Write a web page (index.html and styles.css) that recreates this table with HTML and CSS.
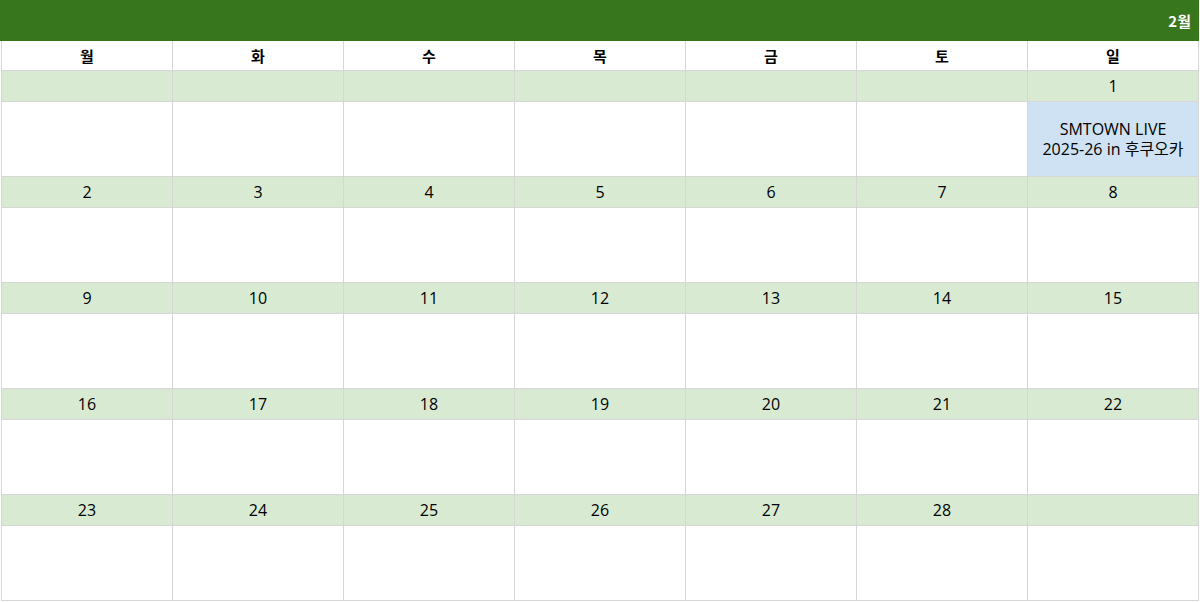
FILE: index.html
```html
<!DOCTYPE html>
<html lang="ko">
<head>
<meta charset="utf-8">
<title>2월</title>
<link rel="stylesheet" href="styles.css">
</head>
<body>
<div class="title">2월</div>
<div class="grid">
  <div class="cell wd">월</div><div class="cell wd">화</div><div class="cell wd">수</div><div class="cell wd">목</div><div class="cell wd">금</div><div class="cell wd">토</div><div class="cell wd">일</div>

  <div class="cell d"></div><div class="cell d"></div><div class="cell d"></div><div class="cell d"></div><div class="cell d"></div><div class="cell d"></div><div class="cell d">1</div>
  <div class="cell e"></div><div class="cell e"></div><div class="cell e"></div><div class="cell e"></div><div class="cell e"></div><div class="cell e"></div><div class="cell e ev">SMTOWN LIVE<br>2025-26 in 후쿠오카</div>

  <div class="cell d">2</div><div class="cell d">3</div><div class="cell d">4</div><div class="cell d">5</div><div class="cell d">6</div><div class="cell d">7</div><div class="cell d">8</div>
  <div class="cell e"></div><div class="cell e"></div><div class="cell e"></div><div class="cell e"></div><div class="cell e"></div><div class="cell e"></div><div class="cell e"></div>

  <div class="cell d">9</div><div class="cell d">10</div><div class="cell d">11</div><div class="cell d">12</div><div class="cell d">13</div><div class="cell d">14</div><div class="cell d">15</div>
  <div class="cell e"></div><div class="cell e"></div><div class="cell e"></div><div class="cell e"></div><div class="cell e"></div><div class="cell e"></div><div class="cell e"></div>

  <div class="cell d">16</div><div class="cell d">17</div><div class="cell d">18</div><div class="cell d">19</div><div class="cell d">20</div><div class="cell d">21</div><div class="cell d">22</div>
  <div class="cell e"></div><div class="cell e"></div><div class="cell e"></div><div class="cell e"></div><div class="cell e"></div><div class="cell e"></div><div class="cell e"></div>

  <div class="cell d">23</div><div class="cell d">24</div><div class="cell d">25</div><div class="cell d">26</div><div class="cell d">27</div><div class="cell d">28</div><div class="cell d"></div>
  <div class="cell e"></div><div class="cell e"></div><div class="cell e"></div><div class="cell e"></div><div class="cell e"></div><div class="cell e"></div><div class="cell e"></div>
</div>
</body>
</html>
```
FILE: styles.css
```css
html, body {
  margin: 0;
  padding: 0;
  background: #ffffff;
}
body {
  font-family: "Open Sans", "Noto Sans CJK KR", sans-serif;
  font-size: 16px;
  color: #000000;
  width: 1200px;
}
.title {
  height: 41px;
  width: 1199px;
  background: #38761d;
  color: #ffffff;
  font-weight: bold;
  font-size: 15px;
  display: flex;
  align-items: center;
  justify-content: flex-end;
  padding-right: 8px;
  box-sizing: border-box;
  font-family: "Noto Sans CJK KR", sans-serif;
}
.grid {
  margin-left: 1px;
  width: 1198px;
  display: grid;
  grid-template-columns: repeat(7, 171px);
  border-left: 1px solid #d6d6d6;
  box-sizing: border-box;
}
.cell {
  border-right: 1px solid #d6d6d6;
  border-bottom: 1px solid #d6d6d6;
  display: flex;
  align-items: center;
  justify-content: center;
  text-align: center;
}
.wd {
  height: 29px;
  font-weight: bold;
  font-size: 15px;
  font-family: "Noto Sans CJK KR", sans-serif;
}
.d {
  height: 30px;
  background: #d9ead3;
}
.e {
  height: 74px;
}
.ev {
  background: #cfe2f3;
  line-height: 20px;
}
```
